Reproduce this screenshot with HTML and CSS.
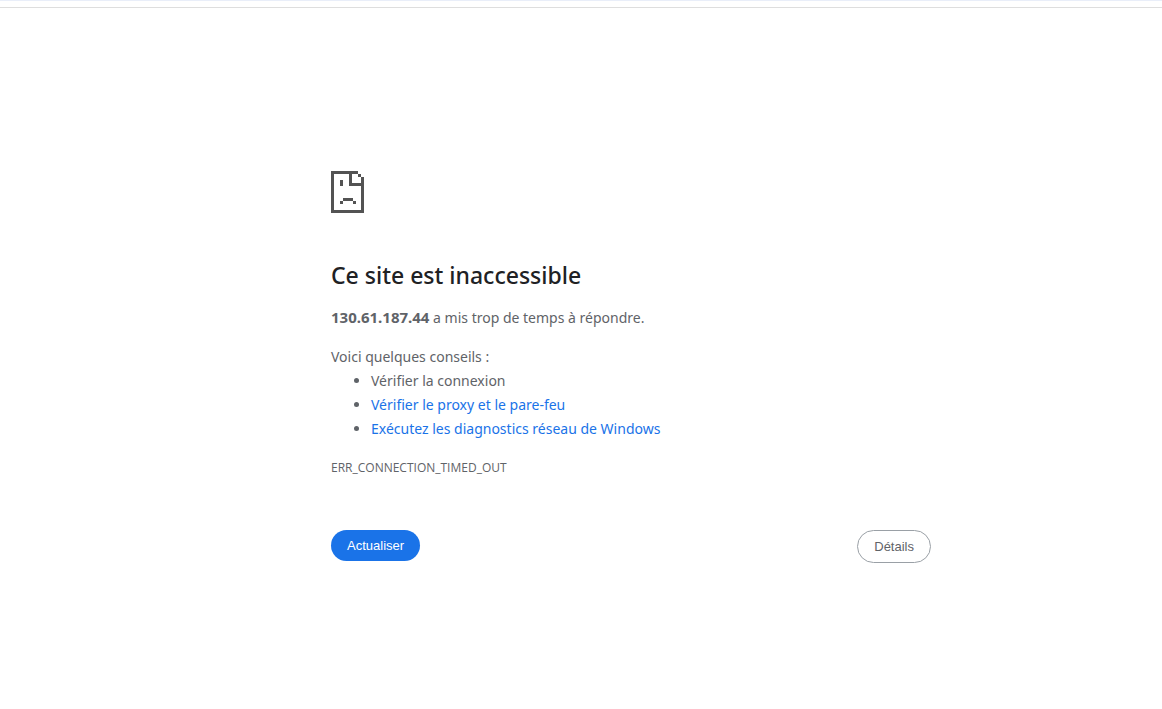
FILE: index.html
```html
<!DOCTYPE html>
<html lang="fr">
<head>
<meta charset="utf-8">
<meta name="viewport" content="width=device-width, initial-scale=1">
<title>130.61.187.44</title>
<link rel="stylesheet" href="styles.css">
</head>
<body>
<div class="toolbar-edge"></div>
<main class="page">
  <div class="error">
    <svg class="error-icon" viewBox="0 0 33 42" shape-rendering="crispEdges" aria-hidden="true">
      <path d="M0 0H27V3H21V12H33V15H18V3H3V39H30V15H33V42H0ZM27 3H30V6H27ZM30 6H33V15H30ZM9 9H12V15H9ZM12 27H22V30H12ZM9 30H12V33H9ZM22 30H25V33H22Z"/>
    </svg>
    <h1 class="title">Ce site est inaccessible</h1>
    <p class="summary"><strong class="host">130.61.187.44</strong> a mis trop de temps à répondre.</p>
    <div class="suggestions">
      <p class="suggestions-label">Voici quelques conseils :</p>
      <ul class="suggestions-list">
        <li>Vérifier la connexion</li>
        <li><a class="link" href="#proxy">Vérifier le proxy et le pare-feu</a></li>
        <li><a class="link" href="#diagnostics">Exécutez les diagnostics réseau de Windows</a></li>
      </ul>
    </div>
    <p class="error-code">ERR_CONNECTION_TIMED_OUT</p>
    <div class="actions">
      <button class="button button-primary" type="button">Actualiser</button>
      <button class="button button-secondary" type="button">Détails</button>
    </div>
  </div>
</main>
</body>
</html>
```
FILE: styles.css
```css
* {
  box-sizing: border-box;
}

body {
  margin: 0;
  background: #fff;
  color: #5f6368;
  font-family: "Segoe UI", "Noto Sans", "Open Sans", sans-serif;
  font-size: 14px;
  line-height: 24px;
}

.toolbar-edge {
  height: 8px;
  border-top: 1px solid #e9eef9;
  border-bottom: 1px solid #dedede;
}

.page {
  padding: 163px 24px 24px;
}

@media (min-width: 800px) {
  .page {
    padding-left: 124px;
  }
}

.error {
  max-width: 600px;
  margin: 0 auto;
}

.error-icon {
  display: block;
  width: 33px;
  height: 42px;
  fill: #535353;
}

.title {
  margin: 48px 0 15px;
  color: #202124;
  font-size: 23px;
  font-weight: 500;
  line-height: 29px;
}

.summary {
  margin: 0 0 15px;
}

.host {
  font-size: 15px;
}

.suggestions-label {
  margin: 0;
}

.suggestions-list {
  margin: 0;
  padding-left: 40px;
}

.link {
  color: #1a73e8;
  text-decoration: none;
}

.error-code {
  margin: 15px 0 0;
  font-family: "Segoe UI", "Open Sans", sans-serif;
  font-size: 12px;
}

.actions {
  display: flex;
  justify-content: space-between;
  align-items: flex-start;
  margin-top: 50px;
}

.button {
  padding: 8px 16px;
  border-radius: 20px;
  font-family: Arial, "Liberation Sans", sans-serif;
  font-size: 13px;
  line-height: 15px;
  cursor: pointer;
}

.button-primary {
  border: 0;
  background: #1a73e8;
  color: #fff;
}

.button-secondary {
  border: 1px solid #9aa0a6;
  background: #fff;
  color: #5f6368;
}
```
